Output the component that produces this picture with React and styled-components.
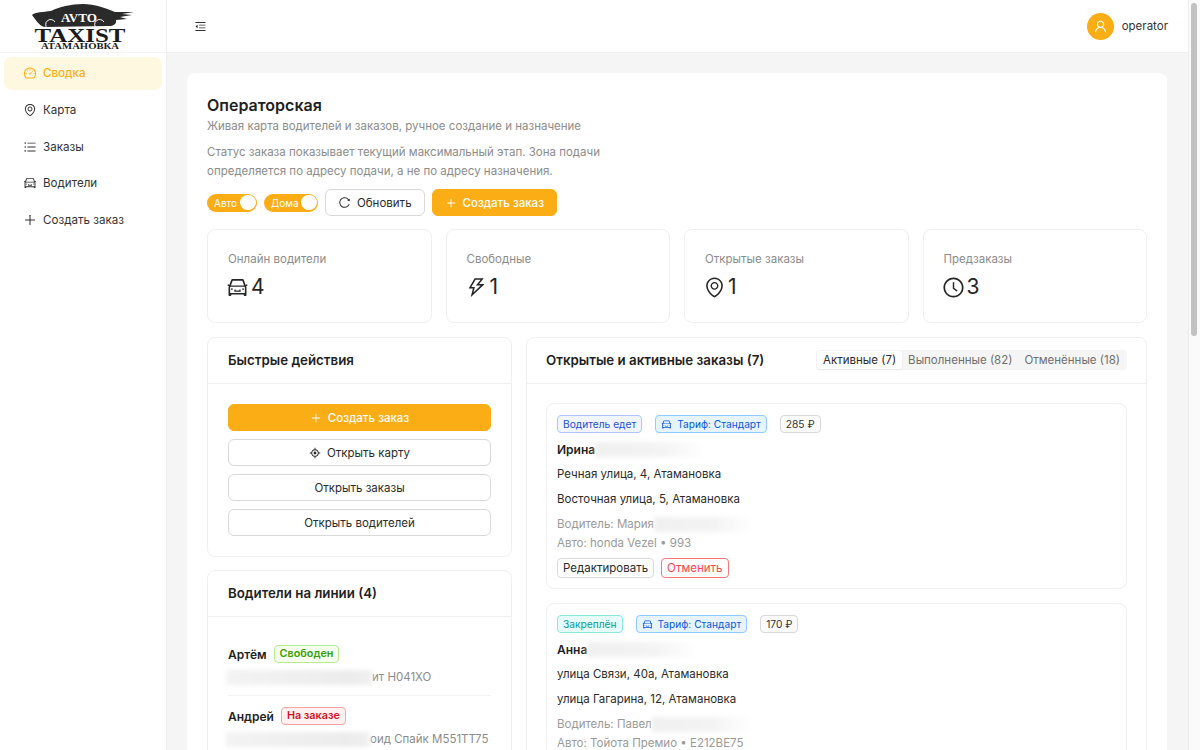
import React from "react";
import styled, { createGlobalStyle } from "styled-components";
import {
  AiOutlineMenuFold, AiOutlineDashboard, AiOutlineEnvironment, AiOutlineUnorderedList, AiOutlineCar,
  AiOutlinePlus, AiOutlineReload, AiOutlineThunderbolt, AiOutlineClockCircle, AiOutlineAim, AiOutlineUser,
} from "react-icons/ai";

const Global = createGlobalStyle`
  html, body { margin: 0; height: 100%; overflow: hidden; }
  body { font-family: Inter, "Liberation Sans", sans-serif; color: #1f1f1f; font-size: 12px; background: #f5f5f5; }
  * { box-sizing: border-box; }
`;
const Shell = styled.div`display: flex; height: 750px; overflow: hidden;`;
const Sidebar = styled.aside`width: 167px; flex: none; background: #fff; border-right: 1px solid #efefef; display: flex; flex-direction: column;`;
const LogoBox = styled.div`height: 53px; display: flex; justify-content: center; align-items: flex-start; padding-top: 3px; border-bottom: 1px solid #f3f3f3;`;
const Nav = styled.nav`display: flex; flex-direction: column; gap: 4px; padding: 4px 4px 0;`;
const NavItem = styled.div`
  height: 32.7px; padding-left: 19px; display: flex; align-items: center; gap: 6px; border-radius: 8px; font-size: 11.6px;
  color: ${p => (p.$active ? "#faad14" : "#333")};
  background: ${p => (p.$active ? "#fff8e1" : "transparent")};
  font-weight: ${p => (p.$active ? 500 : 400)};
`;
const Main = styled.main`flex: 1; min-width: 0; height: 750px; overflow: hidden; background: #f5f5f5;`;
const Rail = styled.div`width: 12px; flex: none; height: 750px; background: #fafafa; border-left: 1px solid #ececec; padding: 3px 3px 0 2px;`;
const RailThumb = styled.div`height: 333px; border-radius: 3px; background: #c2c2c2;`;
const Header = styled.header`height: 53px; background: #fff; border-bottom: 1px solid #efefef; display: flex; align-items: center; justify-content: space-between; padding: 0 20px 0 27px;`;
const UserBox = styled.div`display: flex; align-items: center; gap: 8px; font-size: 11.5px; color: #333;`;
const Avatar = styled.div`width: 27px; height: 27px; border-radius: 50%; background: #faad14; color: #fff; display: flex; align-items: center; justify-content: center;`;
const Content = styled.div`padding: 20px 21px 20px 20px;`;
const Panel = styled.section`background: #fff; border-radius: 8px; padding: 20px;`;
const Title = styled.h1`margin: 0; font-size: 16px; line-height: 24px; font-weight: 600; color: #1f1f1f;`;
const Sub = styled.div`font-size: 11.5px; line-height: 18px; color: #8c8c8c;`;
const Note = styled.p`margin: 8px 0 0; font-size: 11.5px; line-height: 19px; color: #8c8c8c; width: 400px;`;
const Toolbar = styled.div`display: flex; align-items: center; gap: 7px; margin-top: 8px;`;
const Switch = styled.div`
  height: 18px; width: ${p => p.$w}px; border-radius: 9px; background: #faad14; color: #fff; font-size: 10px;
  display: flex; align-items: center; justify-content: space-between; padding: 0 1.5px 0 7px;
  &::after { content: ""; width: 15.5px; height: 15.5px; border-radius: 50%; background: #fff; }
`;
const Btn = styled.button`
  font-family: inherit; font-size: 11.5px; height: 27px; border-radius: 6px; padding: 0 12px; display: inline-flex; align-items: center; justify-content: center; gap: 6px;
  width: ${p => p.$w || "auto"};
  background: ${p => (p.$primary ? "#faad14" : "#fff")};
  color: ${p => (p.$primary ? "#fff" : "#2b2b2b")};
  border: 1px solid ${p => (p.$primary ? "#faad14" : "#d9d9d9")};
  font-weight: ${p => (p.$primary ? 500 : 400)};
`;
const Stats = styled.div`display: grid; grid-template-columns: repeat(4, 1fr); gap: 14px; margin-top: 13px;`;
const Stat = styled.div`height: 94px; border: 1px solid #f0f0f0; border-radius: 8px; padding: 21px 20px 0;`;
const StatLabel = styled.div`font-size: 11.5px; line-height: 16px; color: #8c8c8c;`;
const StatValue = styled.div`display: flex; align-items: center; gap: 2px; margin: 6px 0 0 -2px; font-size: 21px; line-height: 28px; color: #262626;`;
const Columns = styled.div`display: grid; grid-template-columns: 305px 1fr; gap: 14px; margin-top: 14px; align-items: start;`;
const Stack = styled.div`display: flex; flex-direction: column; gap: 13px;`;
const Card = styled.div`border: 1px solid #f0f0f0; border-radius: 8px; background: #fff;`;
const CardHead = styled.div`height: 46px; padding: 0 ${p => p.$pad || 20}px 1px; border-bottom: 1px solid #f0f0f0; display: flex; align-items: center; justify-content: space-between;`;
const CardTitle = styled.h2`margin: 0; font-size: 13.3px; font-weight: 600; color: #1f1f1f;`;
const Actions = styled.div`padding: 20px; display: flex; flex-direction: column; gap: 8px;`;
const Tabs = styled.div`display: flex; background: #f5f5f5; border-radius: 4px; height: 20px; padding: 1px; font-size: 11.5px; line-height: 18px; color: #6f6f6f;`;
const Tab = styled.div`
  padding: 0 6px; border-radius: 3px;
  background: ${p => (p.$active ? "#fff" : "transparent")};
  color: ${p => (p.$active ? "#2b2b2b" : "inherit")};
  box-shadow: ${p => (p.$active ? "0 1px 2px rgba(0,0,0,.06)" : "none")};
`;
const Drivers = styled.div`padding: 27px 20px 0;`;
const Driver = styled.div`padding-bottom: 9px; margin-bottom: 10px; border-bottom: 1px solid #f3f3f3;`;
const DriverTop = styled.div`display: flex; align-items: center; gap: 7px; font-size: 12px; font-weight: 600; height: 20px;`;
const Meta = styled.div`display: flex; align-items: center; font-size: 11.5px; line-height: 18px; color: #8c8c8c; white-space: nowrap; margin-top: 4px;`;
const Badge = styled.span`
  display: inline-flex; align-items: center; gap: 5px; height: 18px; padding: 0 5px; border-radius: 4px; font-size: ${p => p.$bold ? 10.8 : 10.2}px; line-height: 16px; font-weight: ${p => p.$bold ? 600 : 400};
  color: ${p => p.$c}; background: ${p => p.$bg}; border: 1px solid ${p => p.$b};
`;
const Redact = styled.span`
  display: inline-block; flex: none; width: ${p => p.$w}px; height: 15px; margin-left: ${p => p.$ml || 0}px; filter: blur(2px);
  background: linear-gradient(90deg, ${p => p.$fade ? "#f0f0f0, #f3f3f3 60%, #fff" : "#f3f3f3, #ececec 85%, #f0f0f0"});
`;
const Orders = styled.div`padding: 19px; display: flex; flex-direction: column; gap: 14px;`;
const Order = styled.article`border: 1px solid #f0f0f0; border-radius: 8px; padding: 10px 10px 9px; height: 186px;`;
const Tags = styled.div`display: flex; gap: 13px; height: 20px; align-items: center;`;
const Name = styled.div`display: flex; align-items: center; font-size: 12px; font-weight: 600; line-height: 17px; margin-top: 7px; color: #1f1f1f;`;
const Addr = styled.div`font-size: 11.5px; line-height: 18px; margin-top: 7px; color: #2b2b2b;`;
const Faint = styled.div`display: flex; align-items: center; font-size: 11.5px; line-height: 18px; color: #9a9a9a; margin-top: ${p => p.$mt}px;`;
const Buttons = styled.div`display: flex; gap: 7px; margin-top: 6px;`;
const SmallBtn = styled.button`
  font-family: inherit; font-size: 11.5px; height: 20px; padding: 0 5px; border-radius: 4px; background: #fff;
  color: ${p => p.$danger ? "#f5474b" : "#2b2b2b"}; border: 1px solid ${p => p.$danger ? "#f5777a" : "#d9d9d9"};
`;

const Logo = () => (
  <svg width="104" height="47" viewBox="0 0 104 47">
    <path d="M1 12 C4 9 12 9 20 8 C28 4 40 1 52 1 C64 1 74 5 84 9 L103 9 L91 11 L101 12 L89 14 L96 16 L85 17 C86 21 82 23 78 23 L14 24 C8 23 5 17 1 12 Z" fill="#2a2a2a" />
    <path d="M24 19 A5 5 0 1 0 24 24 M73 19 A5 5 0 1 0 73 24" fill="none" stroke="#fff" strokeWidth="1" />
    <text x="48" y="19" textAnchor="middle" fontFamily="Liberation Serif, serif" fontWeight="700" fontSize="11.5" textLength="36" lengthAdjust="spacingAndGlyphs" fill="#fff">AVTO</text>
    <text x="49" y="39" textAnchor="middle" fontFamily="Liberation Serif, serif" fontWeight="700" fontSize="18.5" textLength="91" lengthAdjust="spacingAndGlyphs" fill="#1b1b1b">TAXIST</text>
    <text x="49" y="45.5" textAnchor="middle" fontFamily="Liberation Serif, serif" fontWeight="700" fontSize="7.5" textLength="78" lengthAdjust="spacingAndGlyphs" fill="#1b1b1b">АТАМАНОВКА</text>
  </svg>
);

const nav = [
  [AiOutlineDashboard, "Сводка", true], [AiOutlineEnvironment, "Карта"], [AiOutlineUnorderedList, "Заказы"], [AiOutlineCar, "Водители"], [AiOutlinePlus, "Создать заказ"],
];
const stats = [
  [AiOutlineCar, "Онлайн водители", 4], [AiOutlineThunderbolt, "Свободные", 1], [AiOutlineEnvironment, "Открытые заказы", 1], [AiOutlineClockCircle, "Предзаказы", 3],
];
const tones = {
  blue: { $c: "#1d4ed8", $bg: "#f0f5ff", $b: "#adc6ff" },
  cyan: { $c: "#08979c", $bg: "#e6fffb", $b: "#87e8de" },
  tariff: { $c: "#0958d9", $bg: "#e6f4ff", $b: "#91caff" },
  plain: { $c: "#333", $bg: "#fafafa", $b: "#d9d9d9" },
  green: { $c: "#389e0d", $bg: "#f6ffed", $b: "#b7eb8f" },
  red: { $c: "#cf1322", $bg: "#fff1f0", $b: "#ffa39e" },
};
const orders = [
  { status: "Водитель едет", tone: "blue", price: "285 ₽", name: "Ирина", from: "Речная улица, 4, Атамановка", to: "Восточная улица, 5, Атамановка", driver: "Водитель: Мария", car: "Авто: honda Vezel • 993" },
  { status: "Закреплён", tone: "cyan", price: "170 ₽", name: "Анна", from: "улица Связи, 40а, Атамановка", to: "улица Гагарина, 12, Атамановка", driver: "Водитель: Павел", car: "Авто: Тойота Премио • Е212ВЕ75" },
];

export default function App() {
  return (
    <Shell>
      <Global />
      <Sidebar>
        <LogoBox><Logo /></LogoBox>
        <Nav>
          {nav.map(([I, t, a]) => (
            <NavItem key={t} $active={a}><I size={14} />{t}</NavItem>
          ))}
        </Nav>
      </Sidebar>
      <Main>
        <Header>
          <AiOutlineMenuFold size={13} color="#333" />
          <UserBox><Avatar><AiOutlineUser size={15} /></Avatar>operator</UserBox>
        </Header>
        <Content>
          <Panel>
            <Title>Операторская</Title>
            <Sub>Живая карта водителей и заказов, ручное создание и назначение</Sub>
            <Note>Статус заказа показывает текущий максимальный этап. Зона подачи определяется по адресу подачи, а не по адресу назначения.</Note>
            <Toolbar>
              <Switch $w={50}>Авто</Switch>
              <Switch $w={54}>Дома</Switch>
              <Btn><AiOutlineReload size={13} />Обновить</Btn>
              <Btn $primary><AiOutlinePlus size={12} />Создать заказ</Btn>
            </Toolbar>
            <Stats>
              {stats.map(([I, l, v]) => (
                <Stat key={l}>
                  <StatLabel>{l}</StatLabel>
                  <StatValue><I size={23} />{v}</StatValue>
                </Stat>
              ))}
            </Stats>
            <Columns>
              <Stack>
                <Card>
                  <CardHead><CardTitle>Быстрые действия</CardTitle></CardHead>
                  <Actions>
                    <Btn $primary $w="100%"><AiOutlinePlus size={12} />Создать заказ</Btn>
                    <Btn $w="100%"><AiOutlineAim size={12} />Открыть карту</Btn>
                    <Btn $w="100%">Открыть заказы</Btn>
                    <Btn $w="100%">Открыть водителей</Btn>
                  </Actions>
                </Card>
                <Card>
                  <CardHead><CardTitle>Водители на линии (4)</CardTitle></CardHead>
                  <Drivers>
                    <Driver>
                      <DriverTop>Артём<Badge $bold {...tones.green}>Свободен</Badge></DriverTop>
                      <Meta><Redact $ml={-2} $w={146} />ит Н041ХО</Meta>
                    </Driver>
                    <Driver>
                      <DriverTop>Андрей<Badge $bold {...tones.red}>На заказе</Badge></DriverTop>
                      <Meta><Redact $ml={-2} $w={144} />оид Спайк М551ТТ75</Meta>
                    </Driver>
                  </Drivers>
                </Card>
              </Stack>
              <Card>
                <CardHead $pad={19}>
                  <CardTitle>Открытые и активные заказы (7)</CardTitle>
                  <Tabs>
                    <Tab $active>Активные (7)</Tab>
                    <Tab>Выполненные (82)</Tab>
                    <Tab>Отменённые (18)</Tab>
                  </Tabs>
                </CardHead>
                <Orders>
                  {orders.map(o => (
                    <Order key={o.name}>
                      <Tags>
                        <Badge {...tones[o.tone]}>{o.status}</Badge>
                        <Badge {...tones.tariff}><AiOutlineCar size={11} />Тариф: Стандарт</Badge>
                        <Badge {...tones.plain}>{o.price}</Badge>
                      </Tags>
                      <Name>{o.name}<Redact $fade $w={110} /></Name>
                      <Addr>{o.from}</Addr>
                      <Addr>{o.to}</Addr>
                      <Faint $mt={7}>{o.driver}<Redact $fade $w={100} /></Faint>
                      <Faint $mt={1}>{o.car}</Faint>
                      <Buttons>
                        <SmallBtn>Редактировать</SmallBtn>
                        <SmallBtn $danger>Отменить</SmallBtn>
                      </Buttons>
                    </Order>
                  ))}
                </Orders>
              </Card>
            </Columns>
          </Panel>
        </Content>
      </Main>
      <Rail><RailThumb /></Rail>
    </Shell>
  );
}
